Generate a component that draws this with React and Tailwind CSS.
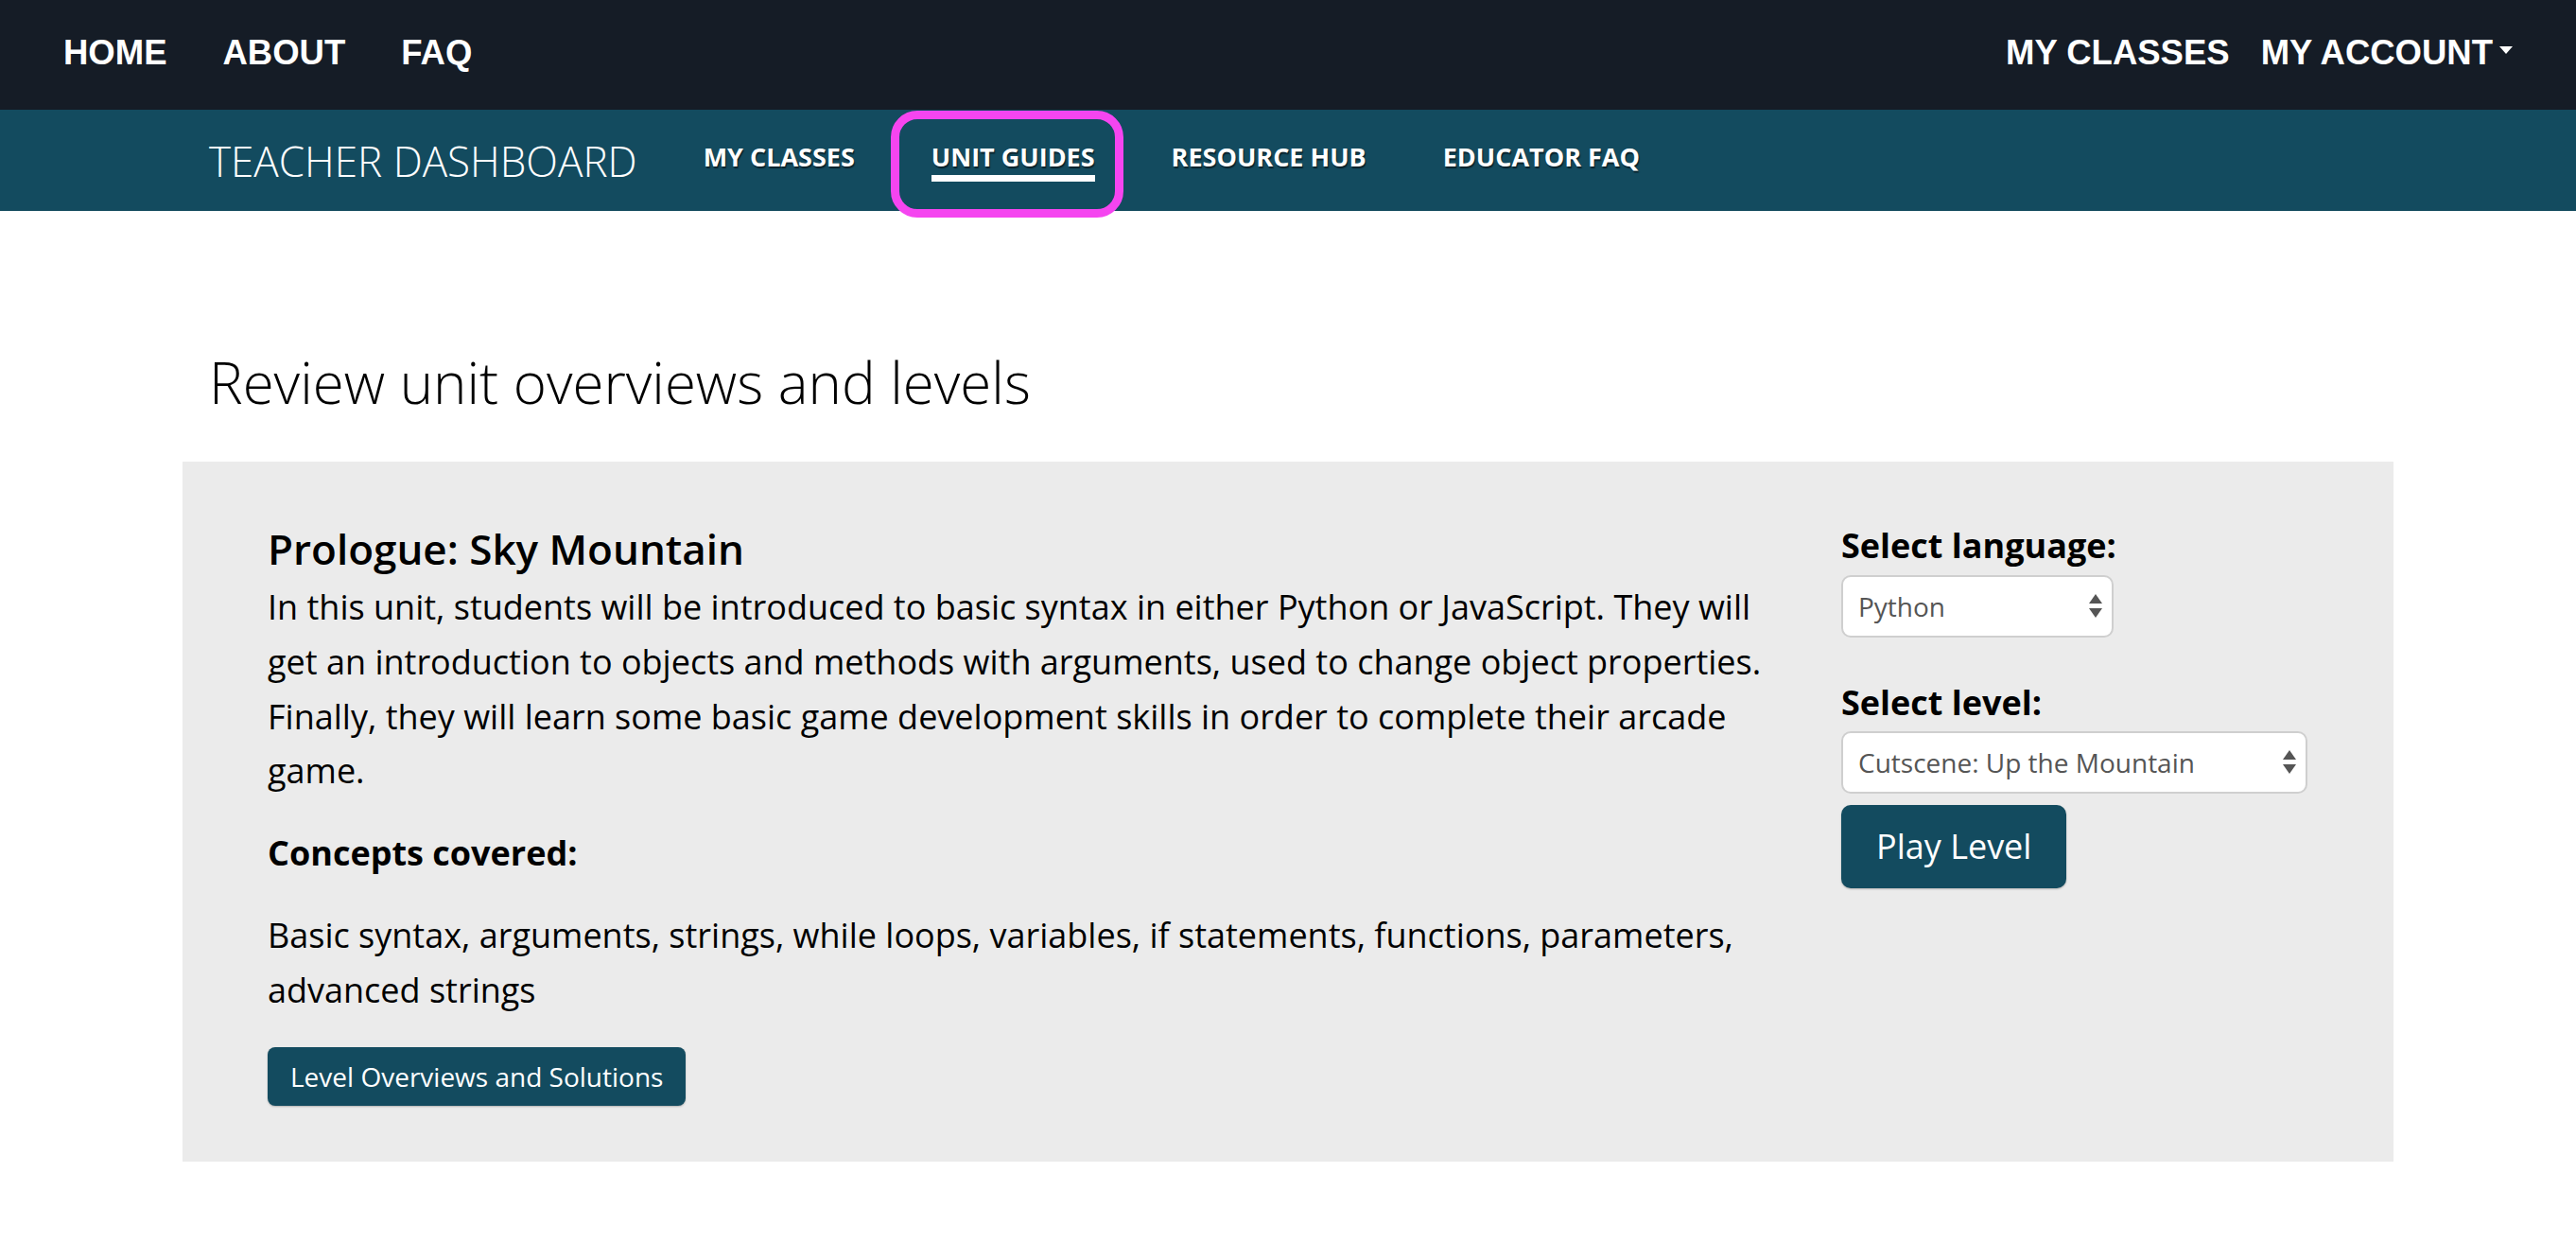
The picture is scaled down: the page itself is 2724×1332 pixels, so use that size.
const sans = "font-['Open_Sans',sans-serif]";

function TopNav() {
  return (
    <header className="flex h-[116px] items-center justify-between bg-[#151c26] px-[67px] font-['Liberation_Sans',Arial,sans-serif] text-[36.5px] font-bold leading-none text-white">
      <nav className="-mt-[4px] flex gap-[59px]">
        <a>HOME</a>
        <a>ABOUT</a>
        <a>FAQ</a>
      </nav>
      <nav className="-mt-[4px] flex items-center gap-[33px]">
        <a>MY CLASSES</a>
        <a className="flex items-center gap-[7px]">
          MY ACCOUNT
          <svg width="14" height="8" viewBox="0 0 14 8" className="mt-[-6px]">
            <path d="M0 0h14L7 8z" fill="white" />
          </svg>
        </a>
      </nav>
    </header>
  );
}

function SubNav() {
  const items = ["MY CLASSES", "UNIT GUIDES", "RESOURCE HUB", "EDUCATOR FAQ"];
  return (
    <div className={`h-[107px] bg-[#134b5f] ${sans}`}>
      <div className="mx-auto flex h-full w-[2338px] items-center px-[28px] text-white">
        <span className="text-[44px] font-light leading-none">TEACHER DASHBOARD</span>
        <ul className="ml-[70px] mt-[4px] flex gap-[81px]">
          {items.map((item) => {
            const active = item === "UNIT GUIDES";
            return (
              <li key={item} className="relative">
                <span
                  className={`block border-b-[7px] pb-[6px] text-[27px] font-bold leading-none [text-shadow:1px_2px_1px_rgba(0,0,0,0.55)] ${
                    active ? "border-white" : "border-transparent"
                  }`}
                >
                  {item}
                </span>
                {active && (
                  <span className="pointer-events-none absolute -bottom-[38px] -left-[43px] -right-[30px] -top-[35px] rounded-[28px] border-[9px] border-[#f545f0]" />
                )}
              </li>
            );
          })}
        </ul>
      </div>
    </div>
  );
}

function SelectBox({ value, width }) {
  return (
    <div
      className={`flex h-[66px] items-center justify-between rounded-[10px] border-2 border-[#cfcfcf] bg-white pl-[16px] pr-[10px] text-[28px] text-[#555] ${width}`}
    >
      <span>{value}</span>
      <svg width="14" height="26" viewBox="0 0 14 26">
        <path d="M7 0L14 10H0z" fill="#555" />
        <path d="M0 15h14L7 25z" fill="#555" />
      </svg>
    </div>
  );
}

function UnitPanel() {
  return (
    <section className="flex bg-[#ebebeb] pb-[59px] pl-[90px] pt-[68px] text-black">
      <div className="w-[1602px]">
        <h3 className="text-[44px] font-semibold leading-[1.1]">Prologue: Sky Mountain</h3>
        <p className="mt-[9px] text-[36px] leading-[1.6]">
          In this unit, students will be introduced to basic syntax in either Python or JavaScript. They will get an
          introduction to objects and methods with arguments, used to change object properties. Finally, they will learn
          some basic game development skills in order to complete their arcade game.
        </p>
        <p className="mt-[29px] text-[36px] font-bold leading-[1.6]">Concepts covered:</p>
        <p className="mt-[30px] text-[36px] leading-[1.6]">
          Basic syntax, arguments, strings, while loops, variables, if statements, functions, parameters, advanced strings
        </p>
        <button className="mt-[31px] h-[62px] rounded-[8px] bg-[#134b5f] px-[24px] text-[28px] text-white shadow-[0_1px_2px_rgba(0,0,0,0.25)]">
          Level Overviews and Solutions
        </button>
      </div>
      <div className="ml-[62px] -mt-[8px]">
        <label className="block text-[36px] font-bold leading-[1.6]">Select language:</label>
        <div className="mt-[2px]">
          <SelectBox value="Python" width="w-[288px]" />
        </div>
        <label className="mt-[40px] block text-[36px] font-bold leading-[1.6]">Select level:</label>
        <div className="mt-[2px]">
          <SelectBox value="Cutscene: Up the Mountain" width="w-[493px]" />
        </div>
        <button className="mt-[12px] h-[88px] rounded-[10px] bg-[#134b5f] px-[37px] text-[36px] text-white shadow-[0_1px_2px_rgba(0,0,0,0.25)]">
          Play Level
        </button>
      </div>
    </section>
  );
}

export default function App() {
  return (
    <div className="min-h-[1332px] bg-white">
      <TopNav />
      <SubNav />
      <main className={`mx-auto w-[2338px] ${sans}`}>
        <h1 className="mt-[148px] px-[28px] text-[60px] font-light leading-[1.1] text-black">
          Review unit overviews and levels
        </h1>
        <div className="mt-[51px]">
          <UnitPanel />
        </div>
      </main>
    </div>
  );
}
